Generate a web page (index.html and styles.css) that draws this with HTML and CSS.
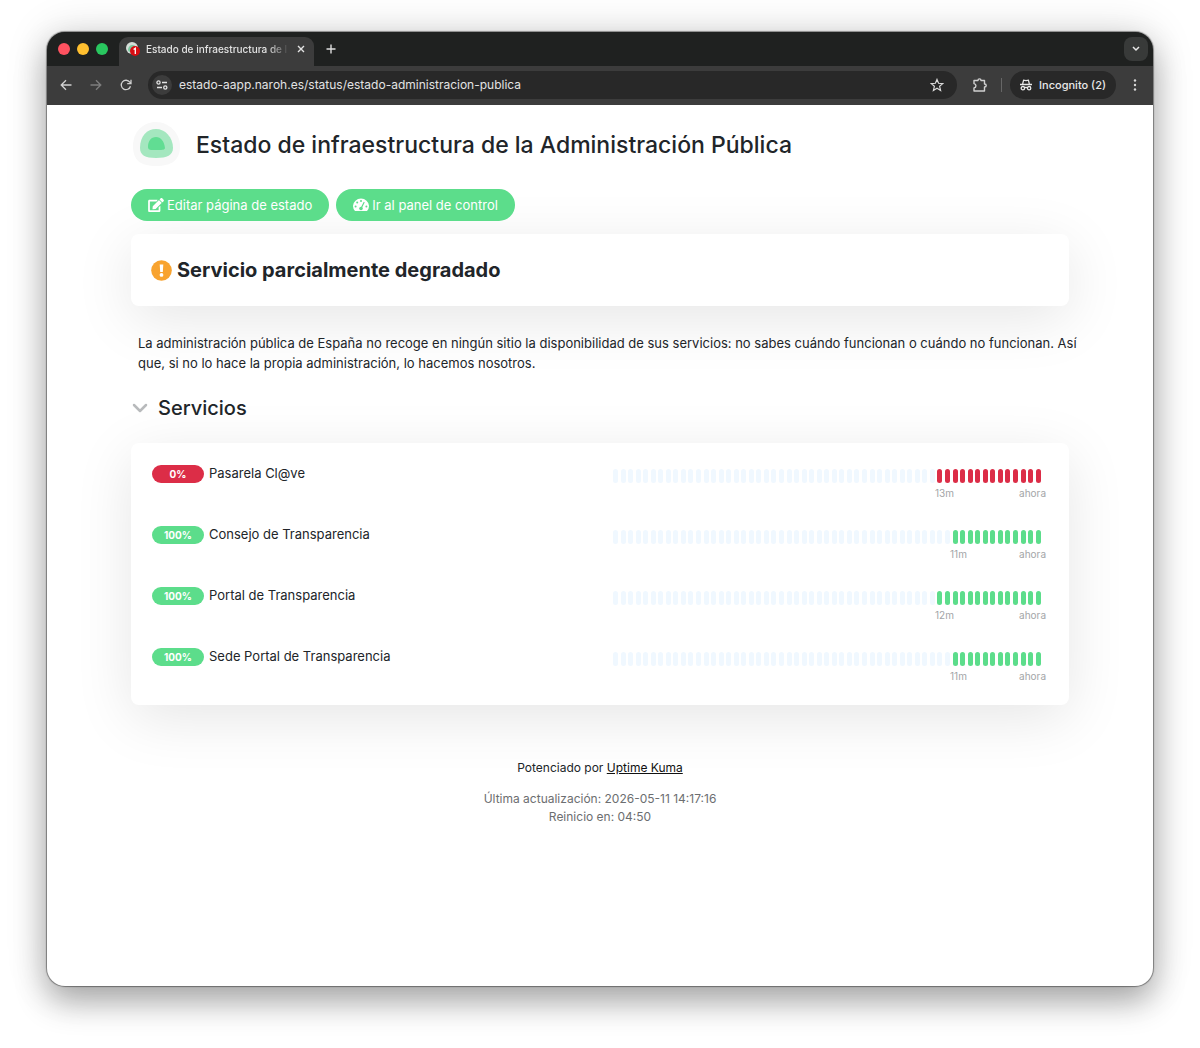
FILE: index.html
```html
<!DOCTYPE html>
<html lang="es">
<head>
  <meta charset="UTF-8">
  <meta name="viewport" content="width=device-width, initial-scale=1">
  <title>Estado de infraestructura de la Administración Pública</title>
  <link rel="stylesheet" href="styles.css">
</head>
<body>
  <div class="window">
    <header class="browser">
      <div class="tab-strip">
        <div class="lights">
          <span class="light close"></span>
          <span class="light minimize"></span>
          <span class="light maximize"></span>
        </div>
        <div class="tab">
          <svg class="favicon" width="14" height="14" viewBox="0 0 14 14" aria-hidden="true">
            <circle cx="6" cy="6" r="6" fill="#d5ddd8"/>
            <path d="M2 8C2 5 4 3 6.500 3S11 5 11 8 2 11 2 8Z" fill="#79c9a0"/>
            <circle cx="9" cy="9" r="5" fill="#d80d12"/>
            <path d="M7.600 7.500 9.300 6.300V12" fill="none" stroke="#fff" stroke-width="1.300"/>
          </svg>
          <span class="tab-title">Estado de infraestructura de l</span>
          <button class="icon-btn tab-close" aria-label="Cerrar">
            <svg width="8" height="8" viewBox="0 0 8 8"><path d="M1 1l6 6M7 1 1 7" stroke="#e3e3e3" stroke-width="1.400"/></svg>
          </button>
        </div>
        <button class="icon-btn new-tab" aria-label="Nueva pestaña">
          <svg width="10" height="10" viewBox="0 0 10 10"><path d="M5 .5v9M.5 5h9" stroke="#dedede" stroke-width="1.400"/></svg>
        </button>
        <button class="icon-btn tab-search" aria-label="Buscar pestañas">
          <svg width="8" height="6" viewBox="0 0 8 6"><path d="M1 1l3 3 3-3" fill="none" stroke="#e8e8e8" stroke-width="1.500"/></svg>
        </button>
      </div>
      <div class="toolbar">
        <div class="nav">
          <button class="icon-btn" aria-label="Atrás">
            <svg width="12" height="12" viewBox="0 0 12 12"><path d="M11.500 6H1.500M6 1.200 1.200 6 6 10.800" fill="none" stroke="#d0d0d0" stroke-width="1.300"/></svg>
          </button>
          <button class="icon-btn" aria-label="Adelante">
            <svg width="12" height="12" viewBox="0 0 12 12"><path d="M.5 6h10M6 1.200 10.800 6 6 10.800" fill="none" stroke="#7e7e7e" stroke-width="1.300"/></svg>
          </button>
          <button class="icon-btn" aria-label="Recargar">
            <svg width="12" height="12" viewBox="0 0 12 12"><path d="M10.500 7.200A4.700 4.700 0 1 1 9.800 3.200L11 4.500M11 .8V4.600H7.200" fill="none" stroke="#d0d0d0" stroke-width="1.300"/></svg>
          </button>
        </div>
        <div class="address">
          <button class="icon-btn site-info" aria-label="Información del sitio">
            <svg width="12" height="10" viewBox="0 0 12 10" fill="none" stroke="#e3e3e3" stroke-width="1.300"><circle cx="2.500" cy="2.500" r="1.600"/><path d="M6 2.500h5M1 7.500h5"/><circle cx="9.300" cy="7.500" r="1.600"/></svg>
          </button>
          <label class="hidden" for="url">Dirección</label>
          <input class="url" id="url" type="text" value="estado-aapp.naroh.es/status/estado-administracion-publica">
          <button class="icon-btn" aria-label="Añadir a marcadores">
            <svg width="14" height="14" viewBox="0 0 14 14"><path d="M7 1.400 8.600 5.300l4.200.3-3.200 2.700 1 4.100L7 10.200l-3.600 2.200 1-4.100L1.200 5.600l4.200-.3Z" fill="none" stroke="#d8d8d8" stroke-width="1.200"/></svg>
          </button>
        </div>
        <button class="icon-btn" aria-label="Extensiones">
          <svg width="16" height="16" viewBox="0 0 16 16"><path d="M2 3.500H6C6 1.300 9 1.300 9 3.500H12.500V7C14.800 7 14.800 10 12.500 10V14H2V11C4.600 10.600 4.600 7 2 6.600Z" fill="none" stroke="#d0d0d0" stroke-width="1.400" stroke-linejoin="round"/></svg>
        </button>
        <span class="divider"></span>
        <button class="incognito">
          <svg width="12" height="12" viewBox="0 0 12 12" fill="none" stroke="#e8e8e8" stroke-width="1.300"><path d="M0 5.500h12M2.600 5.200 3.600 1.200 6 1.700 8.400 1.200l1 4M4.600 8.700Q6 8 7.400 8.700"/><circle cx="2.900" cy="9.200" r="1.700"/><circle cx="9.100" cy="9.200" r="1.700"/></svg>
          Incognito (2)
        </button>
        <button class="icon-btn menu" aria-label="Menú">
          <svg width="4" height="12" viewBox="0 0 4 12" fill="#d8d8d8"><circle cx="2" cy="1.500" r="1.200"/><circle cx="2" cy="6" r="1.200"/><circle cx="2" cy="10.500" r="1.200"/></svg>
        </button>
      </div>
    </header>

    <main class="page">
      <div class="title-row">
        <svg class="logo" width="50" height="48" viewBox="0 0 50 48" aria-hidden="true">
          <path d="M2 25C2 11 12 1 25 1S49 12 49 25C49 39 41 45 25 45S2 39 2 25Z" fill="#f8f8f8"/>
          <path d="M9 27C9 15 16 8 25 8S42 16 42 27C42 34 36 37 25 37S9 34 9 27Z" fill="#a4e7bf"/>
          <path d="M17 26C17 20 20 16 25 16S33 20 34 27C34 29.500 28 29 25 29S17 30 17 26Z" fill="#61dd93"/>
        </svg>
        <h1>Estado de infraestructura de la Administración Pública</h1>
      </div>

      <div class="actions">
        <button class="btn">
          <svg width="16" height="14" viewBox="0 0 576 512" fill="#fff" aria-hidden="true"><path d="M402.600 83.200l90.200 90.200c3.800 3.800 3.800 10 0 13.800L274.400 405.600l-92.800 10.300c-12.400 1.400-22.900-9.100-21.500-21.500l10.300-92.800L388.800 83.200c3.800-3.800 10-3.800 13.800 0zm162-22.900l-48.800-48.800c-15.200-15.200-39.900-15.200-55.200 0l-35.400 35.400c-3.800 3.800-3.800 10 0 13.800l90.200 90.200c3.800 3.800 10 3.800 13.800 0l35.400-35.400c15.200-15.300 15.200-40 0-55.200zM384 346.200V448H64V128h229.800c3.200 0 6.200-1.300 8.500-3.500l40-40c7.600-7.600 2.200-20.500-8.500-20.500H48C21.500 64 0 85.500 0 112v352c0 26.500 21.500 48 48 48h352c26.500 0 48-21.500 48-48V306.200c0-10.700-12.900-16-20.500-8.500l-40 40c-2.200 2.300-3.500 5.300-3.500 8.500z"/></svg>
          Editar página de estado
        </button>
        <button class="btn">
          <svg width="16" height="14" viewBox="0 0 16 14" aria-hidden="true"><path d="M2 13A8 7.500 0 1 1 14 13Z" fill="#fff"/><g fill="#5cdd8b"><circle cx="8" cy="3" r="1"/><circle cx="4.200" cy="4.600" r="1"/><circle cx="2.600" cy="8.500" r="1"/><circle cx="13.400" cy="8.500" r="1"/><circle cx="8" cy="10.500" r="1.800"/></g><path d="M8 10.500 11 4.500" stroke="#5cdd8b" stroke-width="1.200" stroke-linecap="round"/></svg>
          Ir al panel de control
        </button>
      </div>

      <section class="card overall">
        <svg width="21" height="21" viewBox="0 0 21 21" aria-hidden="true"><circle cx="10.500" cy="10.500" r="10.300" fill="#f8a32f"/><path d="M8.700 4.500h3.600l-.5 7.400H9.200Z" fill="#fff"/><circle cx="10.500" cy="14.900" r="1.900" fill="#fff"/></svg>
        <h2>Servicio parcialmente degradado</h2>
      </section>

      <p class="description">La administración pública de España no recoge en ningún sitio la disponibilidad de sus servicios: no sabes cuándo funcionan o cuándo no funcionan. Así que, si no lo hace la propia administración, lo hacemos nosotros.</p>

      <div class="group-title">
        <svg width="16" height="10" viewBox="0 0 16 10" aria-hidden="true"><path d="M2 2l6 6 6-6" fill="none" stroke="#b8babc" stroke-width="2.500" stroke-linecap="round" stroke-linejoin="round"/></svg>
        <h3>Servicios</h3>
      </div>

      <section class="card monitors">
        <div class="monitor">
          <span class="badge down">0%</span>
          <span class="name">Pasarela Cl@ve</span>
          <div class="history">
            <div class="beats" data-filled="14" data-status="down"></div>
            <div class="times since-14"><span>13m</span><span>ahora</span></div>
          </div>
        </div>
        <div class="monitor">
          <span class="badge">100%</span>
          <span class="name">Consejo de Transparencia</span>
          <div class="history">
            <div class="beats" data-filled="12" data-status="up"></div>
            <div class="times since-12"><span>11m</span><span>ahora</span></div>
          </div>
        </div>
        <div class="monitor">
          <span class="badge">100%</span>
          <span class="name">Portal de Transparencia</span>
          <div class="history">
            <div class="beats" data-filled="14" data-status="up"></div>
            <div class="times since-14"><span>12m</span><span>ahora</span></div>
          </div>
        </div>
        <div class="monitor">
          <span class="badge">100%</span>
          <span class="name">Sede Portal de Transparencia</span>
          <div class="history">
            <div class="beats" data-filled="12" data-status="up"></div>
            <div class="times since-12"><span>11m</span><span>ahora</span></div>
          </div>
        </div>
      </section>

      <footer>
        <p class="powered">Potenciado por <a href="#">Uptime Kuma</a></p>
        <p class="refresh">Última actualización: 2026-05-11 14:17:16<br>Reinicio en: 04:50</p>
      </footer>
    </main>
  </div>
  <script src="script.js"></script>
</body>
</html>
```
FILE: styles.css
```css
* {
  box-sizing: border-box;
}
body {
  margin: 0;
  padding: 32px 47px 62px;
  background: #fff;
  color: #212529;
  font-family: Inter, "Liberation Sans", sans-serif;
  font-size: 13px;
}
h1, h2, h3, p {
  margin: 0;
}
button, input {
  font: inherit;
  border: 0;
  padding: 0;
}
svg {
  flex-shrink: 0;
}
.hidden {
  display: none;
}
.window {
  min-height: calc(100vh - 94px);
  border-radius: 18px;
  overflow: hidden;
  background: #fff;
  box-shadow: 0 0 1px 1px rgba(0, 0, 0, 0.4), 0 16px 32px rgba(0, 0, 0, 0.3), 0 0 44px rgba(0, 0, 0, 0.14);
}

/* browser bar */
.browser {
  background: #3c3c3c;
  color: #e3e3e3;
}
.tab-strip {
  display: flex;
  align-items: center;
  height: 34px;
  padding: 0 5px 0 11px;
  background: #1f2120;
}
.lights {
  display: flex;
  gap: 7px;
  margin-right: 11px;
}
.light {
  width: 12px;
  height: 12px;
  border-radius: 50%;
}
.close {
  background: #ff5260;
}
.minimize {
  background: #ffc02f;
}
.maximize {
  background: #29c75f;
}
.tab {
  display: flex;
  align-items: center;
  gap: 6px;
  align-self: flex-end;
  width: 195px;
  height: 29px;
  padding: 0 7px 6px;
  border-radius: 9px 9px 0 0;
  background: #3c3c3c;
}
.tab-title {
  flex: 1;
  white-space: nowrap;
  font-size: 10px;
  font-weight: 500;
  mask-image: linear-gradient(to right, #000 85%, transparent);
}
.icon-btn {
  display: flex;
  align-items: center;
  justify-content: center;
  background: none;
}
.tab-close {
  width: 12px;
}
.new-tab {
  margin-left: 12px;
}
.tab-search {
  width: 24px;
  height: 24px;
  margin-left: auto;
  border-radius: 8px;
  background: #383a39;
}
.toolbar {
  display: flex;
  align-items: center;
  height: 39px;
  padding: 0 16px 2px 13px;
}
.nav {
  display: flex;
  gap: 18px;
  margin-right: 16px;
}
.address {
  display: flex;
  flex: 1;
  align-items: center;
  height: 28px;
  margin-right: 15px;
  padding: 0 13px 0 4px;
  border-radius: 14px;
  background: #282828;
}
.site-info {
  width: 20px;
  height: 20px;
  border-radius: 50%;
  background: #3c3c3c;
}
.url {
  flex: 1;
  margin-left: 7px;
  background: none;
  color: #e3e3e3;
  font-size: 12px;
}
.divider {
  width: 1px;
  height: 14px;
  margin: 0 8px 0 13px;
  background: #666;
}
.incognito {
  display: flex;
  align-items: center;
  gap: 7px;
  height: 28px;
  margin-right: 17px;
  padding: 0 10px;
  border-radius: 14px;
  background: #282828;
  color: #e8e8e8;
  font-size: 11px;
  font-weight: 500;
}

/* status page */
.page {
  max-width: 938px;
  margin: 0 auto;
  padding: 15px 0 40px;
}
.title-row {
  display: flex;
  align-items: center;
  gap: 15px;
  height: 49px;
}
h1 {
  font-size: 23px;
  font-weight: 500;
}
.actions {
  display: flex;
  gap: 7px;
  margin: 20px 0 13px;
}
.btn {
  display: flex;
  align-items: center;
  gap: 3px;
  height: 32px;
  padding: 0 17px;
  border-radius: 16px;
  background: #5cdd8b;
  color: #fff;
}
.card {
  border-radius: 8px;
  background: #fff;
  box-shadow: 0 13px 59px rgba(0, 0, 0, 0.1);
}
.overall {
  display: flex;
  align-items: center;
  gap: 5px;
  height: 72px;
  padding: 0 20px;
}
h2 {
  font-size: 20px;
  font-weight: 700;
}
.description {
  margin: 27px -14px 23px 0;
  padding-left: 7px;
  line-height: 20px;
}
.group-title {
  display: flex;
  align-items: center;
  gap: 10px;
  height: 24px;
  margin-bottom: 23px;
  padding-left: 1px;
}
h3 {
  font-size: 20px;
  font-weight: 500;
}
.monitors {
  display: grid;
  gap: 25px;
  padding: 20px 21px 23px;
}
.monitor {
  display: flex;
  height: 36px;
}
.badge {
  width: 52px;
  height: 18px;
  margin-top: 2px;
  border-radius: 9px;
  background: #5cdd8b;
  color: #fff;
  font-size: 10px;
  font-weight: 700;
  line-height: 18px;
  text-align: center;
}
.badge.down {
  background: #dc2d47;
}
.name {
  flex: 1;
  margin-left: 5px;
  line-height: 20px;
}
.history {
  width: 49%;
  padding: 6px 2px 0 4px;
}
.beats {
  display: flex;
  justify-content: space-between;
  padding-right: 5px;
}
.beat {
  width: 5px;
  height: 14px;
  border-radius: 3px;
  background: #f0f8ff;
}
.beat.up {
  background: #5cdd8b;
}
.beat.down {
  background: #dc2d47;
}
.times {
  display: flex;
  justify-content: space-between;
  margin-top: 4px;
  margin-left: auto;
  color: #a3a5a7;
  font-size: 10px;
  line-height: 12px;
}
.since-14 {
  width: 111px;
}
.since-12 {
  width: 96px;
}
footer {
  margin-top: 54px;
  text-align: center;
  font-size: 12px;
  line-height: 18px;
}
footer a {
  color: #111;
}
.refresh {
  margin-top: 13px;
  color: #6c6e70;
}
```
FILE: script.js
```javascript
const TOTAL_BEATS = 57;

document.querySelectorAll('.beats').forEach((bar) => {
  const filled = Number(bar.dataset.filled);
  for (let i = 0; i < TOTAL_BEATS; i++) {
    const beat = document.createElement('span');
    beat.className = 'beat';
    if (i >= TOTAL_BEATS - filled) beat.classList.add(bar.dataset.status);
    bar.appendChild(beat);
  }
});
```
